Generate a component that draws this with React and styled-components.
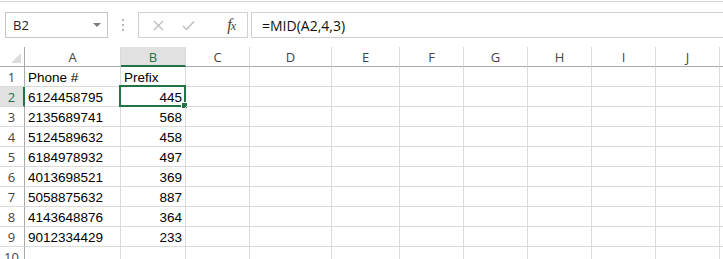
import React from "react";
import styled, { createGlobalStyle } from "styled-components";

const GlobalStyle = createGlobalStyle`
  html, body {
    margin: 0;
    padding: 0;
    background: #ffffff;
    overflow: hidden;
  }
  body {
    font-family: "Liberation Sans", Arial, sans-serif;
  }
`;

const COLS = [
  { name: "A", width: 96 },
  { name: "B", width: 65 },
  { name: "C", width: 64 },
  { name: "D", width: 82 },
  { name: "E", width: 68 },
  { name: "F", width: 64 },
  { name: "G", width: 64 },
  { name: "H", width: 64 },
  { name: "I", width: 64 },
  { name: "J", width: 64 },
  { name: "", width: 64 },
];

const ROWS = [
  ["Phone #", "Prefix"],
  ["6124458795", "445"],
  ["2135689741", "568"],
  ["5124589632", "458"],
  ["6184978932", "497"],
  ["4013698521", "369"],
  ["5058875632", "887"],
  ["4143648876", "364"],
  ["9012334429", "233"],
  ["", ""],
];

const GREEN = "#217346";
const GRID = "#dadada";

const Page = styled.div`
  width: 723px;
  height: 259px;
  overflow: hidden;
  background: #fff;
`;

const TopLine = styled.div`
  margin-top: 1px;
  height: 1px;
  background: #d6d6d6;
`;

const FormulaRow = styled.div`
  display: flex;
  align-items: stretch;
  height: 26px;
  margin-top: 10px;
  margin-bottom: 9px;
  padding-left: 5px;
`;

const NameBox = styled.div`
  width: 103px;
  box-sizing: border-box;
  border: 1px solid #c6c6c6;
  display: flex;
  align-items: center;
  justify-content: space-between;
  padding: 0 6px 0 7px;
  font-family: "Open Sans", "Liberation Sans", sans-serif;
  font-size: 13px;
  color: #222;
`;

const Arrow = styled.span`
  width: 0;
  height: 0;
  border-left: 4px solid transparent;
  border-right: 4px solid transparent;
  border-top: 4px solid #7a7a7a;
`;

const Grip = styled.div`
  width: 30px;
  display: flex;
  flex-direction: column;
  align-items: center;
  justify-content: center;
  gap: 3px;
  & span {
    width: 2px;
    height: 2px;
    background: #b5b5b5;
  }
`;

const ButtonBox = styled.div`
  width: 110px;
  box-sizing: border-box;
  border: 1px solid #d0d0d0;
  display: flex;
  align-items: center;
  padding: 0 12px 0 14px;
  gap: 18px;
`;

const Fx = styled.span`
  margin-left: auto;
  font-family: "Liberation Serif", "Times New Roman", serif;
  font-style: italic;
  font-size: 16px;
  color: #444;
  letter-spacing: -1px;
  & small {
    font-size: 12px;
  }
`;

const FormulaInput = styled.div`
  flex: 1;
  margin-left: 3px;
  box-sizing: border-box;
  border: 1px solid #d0d0d0;
  border-right: none;
  display: flex;
  align-items: center;
  padding-left: 10px;
  font-family: "Open Sans", "Liberation Sans", sans-serif;
  font-size: 14px;
  color: #111;
`;

const Sheet = styled.div`
  display: grid;
  grid-template-columns: 25px ${COLS.map((c) => c.width + "px").join(" ")};
  grid-auto-rows: 20px;
`;

const Corner = styled.div`
  box-sizing: border-box;
  border-right: 1px solid #ababab;
  border-bottom: 1px solid #ababab;
  display: flex;
  align-items: flex-end;
  justify-content: flex-end;
  padding: 0 3px 3px 0;
`;

const ColHead = styled.div`
  box-sizing: border-box;
  border-right: 1px solid ${GRID};
  border-bottom: ${(p) => (p.$active ? `2px solid ${GREEN}` : "1px solid #ababab")};
  background: ${(p) => (p.$active ? "#e1e1e1" : "#fff")};
  color: ${(p) => (p.$active ? GREEN : "#444")};
  font-family: "Open Sans", "Liberation Sans", sans-serif;
  font-size: 13px;
  display: flex;
  align-items: center;
  justify-content: center;
  padding-top: ${(p) => (p.$active ? "1px" : "0")};
`;

const RowHead = styled.div`
  box-sizing: border-box;
  border-right: ${(p) => (p.$active ? `2px solid ${GREEN}` : "1px solid #ababab")};
  border-bottom: 1px solid ${GRID};
  background: ${(p) => (p.$active ? "#e1e1e1" : "#fff")};
  color: ${(p) => (p.$active ? GREEN : "#444")};
  font-family: "Open Sans", "Liberation Sans", sans-serif;
  font-size: 13px;
  display: flex;
  align-items: center;
  justify-content: center;
  padding-right: ${(p) => (p.$active ? "0" : "1px")};
`;

const Cell = styled.div`
  position: relative;
  box-sizing: border-box;
  border-right: 1px solid ${GRID};
  border-bottom: 1px solid ${GRID};
  display: flex;
  align-items: center;
  justify-content: ${(p) => (p.$num ? "flex-end" : "flex-start")};
  padding: 2px 3px 0 3px;
  font-family: "Liberation Sans", Arial, sans-serif;
  font-size: 13.5px;
  color: #000;
  white-space: nowrap;
`;

const Selection = styled.div`
  position: absolute;
  left: -2px;
  top: -2px;
  right: -1px;
  bottom: -1px;
  border: 2px solid ${GREEN};
  pointer-events: none;
`;

const Handle = styled.div`
  position: absolute;
  right: -4px;
  bottom: -4px;
  width: 5px;
  height: 5px;
  background: ${GREEN};
  border: 1px solid #fff;
`;

const Icon = ({ kind }) =>
  kind === "x" ? (
    <svg width="11" height="11" viewBox="0 0 11 11">
      <path d="M1 1 L10 10 M10 1 L1 10" stroke="#bcbcbc" strokeWidth="1.3" fill="none" />
    </svg>
  ) : (
    <svg width="13" height="11" viewBox="0 0 13 11">
      <path d="M1 6 L4.5 9.5 L12 1.5" stroke="#bcbcbc" strokeWidth="1.4" fill="none" />
    </svg>
  );

export default function App() {
  return (
    <Page>
      <GlobalStyle />
      <TopLine />
      <FormulaRow>
        <NameBox>
          B2
          <Arrow />
        </NameBox>
        <Grip>
          <span />
          <span />
          <span />
        </Grip>
        <ButtonBox>
          <Icon kind="x" />
          <Icon kind="check" />
          <Fx>
            f<small>x</small>
          </Fx>
        </ButtonBox>
        <FormulaInput>=MID(A2,4,3)</FormulaInput>
      </FormulaRow>
      <Sheet>
        <Corner>
          <svg width="10" height="10" viewBox="0 0 10 10">
            <path d="M10 0 L10 10 L0 10 Z" fill="#dcdcdc" />
          </svg>
        </Corner>
        {COLS.map((c) => (
          <ColHead key={c.name || "k"} $active={c.name === "B"}>
            {c.name}
          </ColHead>
        ))}
        {ROWS.map((row, r) => (
          <React.Fragment key={r}>
            <RowHead $active={r === 1}>{r + 1}</RowHead>
            {COLS.map((c, ci) => {
              const v = row[ci] || "";
              const num = r > 0 && ci === 1;
              return (
                <Cell key={ci} $num={num}>
                  {v}
                  {r === 1 && ci === 1 && (
                    <Selection>
                      <Handle />
                    </Selection>
                  )}
                </Cell>
              );
            })}
          </React.Fragment>
        ))}
      </Sheet>
    </Page>
  );
}
